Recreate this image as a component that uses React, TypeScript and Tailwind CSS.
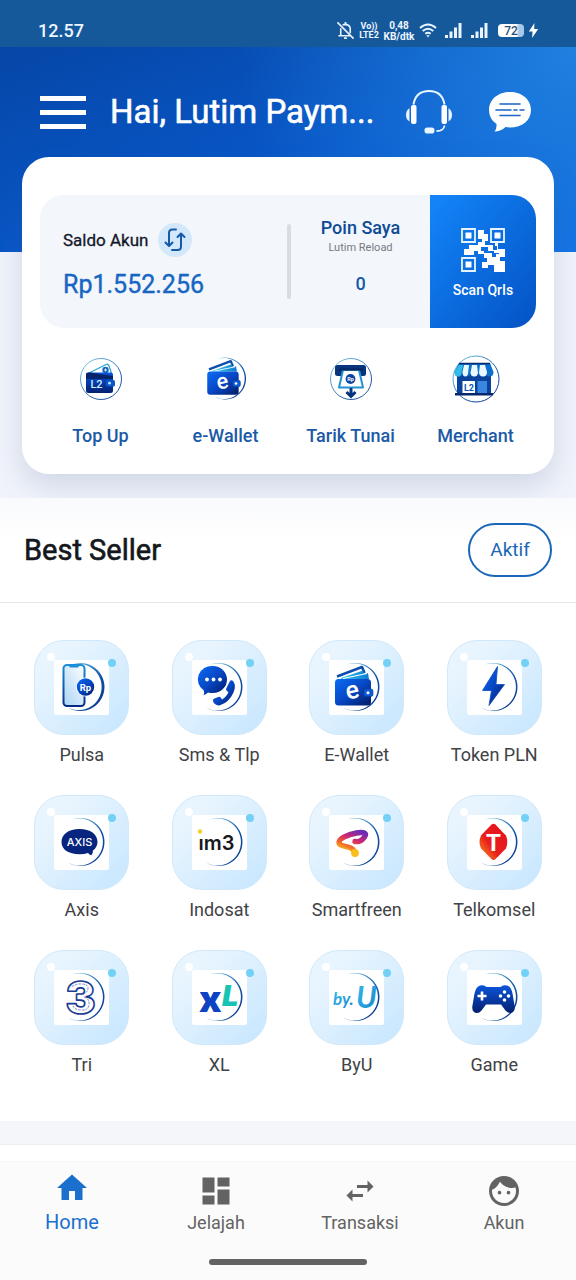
import React from 'react';
import type { ReactNode } from 'react';
import { MdHome, MdDashboard, MdSwapHoriz, MdFace } from 'react-icons/md';

// Shared gradients used by all the product icons
const IconDefs = () => (
    <svg width="0" height="0" className="absolute" aria-hidden="true">
        <defs>
            <linearGradient id="blue" x1="0" y1="0" x2="1" y2="1">
                <stop offset="0" stopColor="#0a6cf5" />
                <stop offset="0.5" stopColor="#0647c4" />
                <stop offset="1" stopColor="#021a63" />
            </linearGradient>
            <linearGradient id="blueDown" x1="0" y1="0" x2="0" y2="1">
                <stop offset="0" stopColor="#0a55dc" />
                <stop offset="1" stopColor="#04206f" />
            </linearGradient>
            <linearGradient id="cyan" x1="0" y1="0" x2="1" y2="0">
                <stop offset="0" stopColor="#36c9ee" />
                <stop offset="1" stopColor="#0b7bd0" />
            </linearGradient>
            <linearGradient id="ring" x1="0" y1="0" x2="1" y2="1">
                <stop offset="0" stopColor="#7fd0ea" />
                <stop offset="0.6" stopColor="#1256a8" />
                <stop offset="1" stopColor="#0a2f86" />
            </linearGradient>
            <linearGradient id="screen" x1="0" y1="1" x2="1" y2="0">
                <stop offset="0" stopColor="#a9d3f5" />
                <stop offset="1" stopColor="#ffffff" />
            </linearGradient>
            <linearGradient id="phone" x1="0" y1="0" x2="0" y2="1">
                <stop offset="0" stopColor="#1b8fd8" />
                <stop offset="1" stopColor="#052c80" />
            </linearGradient>
            <linearGradient id="smart" x1="0.9" y1="0" x2="0.4" y2="1">
                <stop offset="0" stopColor="#6a2bb5" />
                <stop offset="0.4" stopColor="#d2286f" />
                <stop offset="0.7" stopColor="#f2652b" />
                <stop offset="1" stopColor="#f9c51a" />
            </linearGradient>
            <linearGradient id="red" x1="1" y1="0" x2="0" y2="1">
                <stop offset="0" stopColor="#e60f1e" />
                <stop offset="0.6" stopColor="#e8201c" />
                <stop offset="1" stopColor="#fba01c" />
            </linearGradient>
            <linearGradient id="sky" x1="0" y1="0" x2="1" y2="1">
                <stop offset="0" stopColor="#35bdf0" />
                <stop offset="1" stopColor="#1785cf" />
            </linearGradient>
        </defs>
    </svg>
);

// Circle that gets thinner towards the left
const Ring = ({ thick = false }: { thick?: boolean }) => (
    <path
        fill="url(#ring)"
        d={thick
            ? 'M14.5 6.2A24 24 0 1 1 14.5 47.8A23.1 23.1 0 1 0 14.5 6.2Z'
            : 'M14.5 6.2A24 24 0 1 1 14.5 47.8A23.5 23.5 0 1 0 14.5 6.2Z'}
    />
);

const Wallet = () => (
    <g>
        <path d="M8 16.500 33 7l2.500 6" fill="none" stroke="#0b4fae" strokeWidth="2.600" strokeLinejoin="round" />
        <path d="M12 18 34 10.500l1 3.500 4-1 1 6H12z" fill="url(#cyan)" />
        <path d="M14 18.500 38 13.500" stroke="#fff" strokeWidth="1" />
        <rect x="6" y="19" width="36" height="26.500" rx="3.500" fill="url(#blue)" />
        <rect x="35" y="29" width="9" height="7.500" rx="2" fill="#0d5ad6" stroke="#0a3d9e" strokeWidth="0.600" />
        <circle cx="39" cy="32.700" r="1.500" fill="#fff" />
        <text x="23.500" y="38.500" textAnchor="middle" fontSize="25" fontWeight="500" fill="#fff" transform="rotate(-12 23.500 32)">e</text>
    </g>
);

const TopUpIcon = () => (
    <svg viewBox="0 0 48 48" className="size-12">
        <circle cx="24" cy="24" r="20.500" fill="none" stroke="url(#ring)" strokeWidth="0.900" />
        <path d="M13 17.500 29 9.500q2-.8 2.800 1L34.500 18v7H13z" fill="#fff" stroke="#2aa5d8" strokeWidth="1.300" />
        <circle cx="28.500" cy="15" r="3.200" fill="#1667b8" />
        <path d="M27 15h3m-1.500-1.500v3" stroke="#fff" strokeWidth="0.800" />
        <rect x="9" y="17.500" width="27" height="20.500" rx="2.500" fill="url(#blueDown)" />
        <path d="M9 19q0-2 4-1.500L36 21v3H9z" fill="#06246b" />
        <rect x="29" y="25" width="9" height="6.500" rx="1.500" fill="#0c57c9" />
        <circle cx="32.500" cy="28.200" r="1.400" fill="#bfe4ff" />
        <text x="19.500" y="33" textAnchor="middle" fontSize="11" fontWeight="500" fill="#cdefff">L2</text>
    </svg>
);

const EWalletIcon = () => (
    <svg viewBox="0 0 55 55" className="size-12">
        <Ring />
        <Wallet />
    </svg>
);

const WithdrawIcon = () => (
    <svg viewBox="0 0 48 48" className="size-12">
        <circle cx="24" cy="24" r="20.500" fill="none" stroke="url(#ring)" strokeWidth="0.900" />
        <rect x="8" y="10" width="31" height="11" rx="2.500" fill="#08347e" />
        <path d="M16 15h16l4 17.500H12z" fill="#fff" stroke="#2392d2" strokeWidth="2" strokeLinejoin="round" />
        <path d="M12 14.500h24" stroke="#052560" strokeWidth="2" />
        <circle cx="23.500" cy="24" r="4.900" fill="#0b449e" />
        <text x="23.500" y="26" textAnchor="middle" fontSize="5.500" fontWeight="700" fill="#fff">Rp</text>
        <path d="M24 33v8m-4.500-4 4.500 4.500 4.500-4.500" fill="none" stroke="#07327e" strokeWidth="3" />
    </svg>
);

const MerchantIcon = () => (
    <svg viewBox="0 0 48 48" className="size-12">
        <circle cx="24" cy="24" r="23" fill="none" stroke="url(#ring)" strokeWidth="1" />
        <path d="M5 18h34v20H5z" fill="#0a429c" />
        <path d="M3 38h38v2.500H3z" fill="#06286c" />
        <rect x="10.500" y="26" width="12.500" height="12" fill="#fff" />
        <text x="17" y="35.500" textAnchor="middle" fontSize="9" fontWeight="700" fill="#0b56b5">L2</text>
        <rect x="25.500" y="26" width="9.500" height="12" fill="#3a86e0" />
        <path d="M7 8h31l3.500 9q0 4.500-4 4.500T34 17q0 4.500-4 4.500T26 17q0 4.500-3.800 4.500T18.500 17q0 4.500-4 4.500T10.500 17q0 4.500-4 4.500T2.500 17z" fill="#0d6fd0" />
        <path d="M12 10h5l-1 9q-1 2.500-2.500 2.500-3 0-3-4.500zM20 10h5l1 8q-.5 3.500-3.800 3.500T18.500 18zM28 10h5l2 7q0 4.500-4 4.500-3.500 0-4-4z" fill="#eaf8ff" />
        <path d="M7 10h4l-2 10q-1 1.500-3 1.500-3.500 0-3-5z" fill="#32bde6" />
        <path d="M7 8.500h31" stroke="#06276b" strokeWidth="1.500" />
    </svg>
);

const Tile = ({ children, label }: { children: ReactNode; label: string }) => (
    <a href="#" className="flex flex-col items-center gap-2">
        <div className="relative flex size-[95px] items-center justify-center rounded-[30px] border border-[#d0e8f9] bg-linear-to-br from-[#e9f5fe] from-20% to-[#c6e6ff]">
            <span className="absolute left-3 top-3 size-2 rounded-full bg-white" />
            <span className="absolute right-3 top-[18px] size-2 rounded-full bg-[#72d1f5]" />
            <svg viewBox="0 0 55 55" className="size-[55px] rounded-xs bg-white">
                {children}
            </svg>
        </div>
        <span className="whitespace-nowrap text-[18px] leading-6 text-[#3f4246]">{label}</span>
    </a>
);

const products: { label: string; icon: ReactNode }[] = [
    {
        label: 'Pulsa',
        icon: (
            <>
                <Ring thick />
                <rect x="9.500" y="5" width="21" height="41" rx="3.500" fill="url(#screen)" stroke="url(#phone)" strokeWidth="2" />
                <path d="M14 5h12l-2 2.500h-8z" fill="#1b8fd8" />
                <circle cx="31.500" cy="27" r="9.500" fill="#fff" />
                <circle cx="31.500" cy="27" r="8.700" fill="url(#blue)" />
                <text x="31.500" y="30.500" textAnchor="middle" fontSize="9.500" fontWeight="700" fill="#fff">Rp</text>
            </>
        ),
    },
    {
        label: 'Sms & Tlp',
        icon: (
            <>
                <Ring />
                <path d="M21 6a14 13.500 0 0 1 0 27q-3 0-5-.6-2 2.200-4.500 2.600 1.200-2.500.3-4.500A14 13.500 0 0 1 21 6z" fill="url(#blue)" />
                <circle cx="15" cy="19.500" r="1.900" fill="#fff" />
                <circle cx="21.500" cy="19.500" r="1.900" fill="#fff" />
                <circle cx="28" cy="19.500" r="1.900" fill="#fff" />
                <path d="M38 21q1.500-1.500 3.200.2 3.300 4.500.3 11.300-4.500 10-13.500 12.800-5 .8-7-4-.6-2 1.400-2.800l4-1.600q1.600-.5 2.600 1l1 1.500q4.500-2.400 6.500-7.400l-1.300-.8q-1.600-1-1-2.800z" fill="url(#blue)" />
            </>
        ),
    },
    { label: 'E-Wallet', icon: <><Ring /><Wallet /></> },
    {
        label: 'Token PLN',
        icon: (
            <>
                <Ring />
                <path d="M30.500 6.500 15.500 30.500h9L22 45.500 37.500 24.500h-8.500z" fill="url(#blue)" stroke="#0a49bd" strokeWidth="0.800" strokeLinejoin="round" />
            </>
        ),
    },
    {
        label: 'Axis',
        icon: (
            <>
                <Ring />
                <path d="M25.500 14c11 0 18 5.300 18 13 0 3.600-1.800 6.500-4.600 8.600q.3 2.600-1.500 4.600-2-.4-3.400-2.300-3.600 1.300-8.500 1.300c-11 0-18-4.600-18-12.200S14.500 14 25.500 14z" fill="#07257f" />
                <text x="25.500" y="31" textAnchor="middle" fontSize="11" fontWeight="500" fill="#fff" className="font-['Inter',sans-serif]">AXIS</text>
            </>
        ),
    },
    {
        label: 'Indosat',
        icon: (
            <>
                <Ring />
                <text x="24.500" y="34.500" textAnchor="middle" fontSize="20" fontWeight="600" fill="#17181c" className="font-['Inter',sans-serif]">ım3</text>
                <circle cx="8" cy="16.500" r="2.200" fill="#f3d02c" />
            </>
        ),
    },
    {
        label: 'Smartfreen',
        icon: (
            <>
                <Ring />
                <path d="M26 26.500c5 1 9.500-3 10.500-6.500.6-2.500-4-3-9-2-9 1.700-17.500 5.500-17.500 9.500 0 3 5 3.500 9 4.500 4.500 1.200 6.500 3 7 6.500" fill="none" stroke="url(#smart)" strokeWidth="5.400" strokeLinecap="round" strokeLinejoin="round" />
                <circle cx="26" cy="38" r="3.900" fill="#f9bd1c" />
            </>
        ),
    },
    {
        label: 'Telkomsel',
        icon: (
            <>
                <Ring />
                <path d="M24.500 9.500q2-1.500 4 0C32 13.500 34.500 16 39 20.500q2.500 6.500 0 13C35 37.500 32 40.500 28 44.500q-1.500 1-3 0C21 40.500 18 37.500 14 33.500q-3-6.500 0-13C18 16 21 13.500 24.500 9.500z" fill="url(#red)" />
                <text x="26.500" y="36" textAnchor="middle" fontSize="24" fontWeight="700" fill="#fff">T</text>
            </>
        ),
    },
    {
        label: 'Tri',
        icon: (
            <>
                <Ring />
                <text x="26.500" y="44" textAnchor="middle" fontSize="45" fontWeight="900" fill="#fff" stroke="#1a3c93" strokeWidth="1.600" strokeLinejoin="round" className="font-['Inter',sans-serif]">3</text>
                <path d="M18 16.500q5-3 9-2.500 7 0 7 4t-5 6.500M30 27q6 2 5 8t-8 5q-6 0-8-4" fill="none" stroke="#3f5cae" strokeWidth="0.700" strokeDasharray="2.500 1" />
            </>
        ),
    },
    {
        label: 'XL',
        icon: (
            <>
                <Ring />
                <text x="7" y="42" fontSize="37" fontWeight="900" fill="#0b43c2" className="font-['Inter',sans-serif]">x</text>
                <text x="30" y="36" fontSize="29" fontWeight="900" fill="#17c3b2" className="font-['Inter',sans-serif] italic">L</text>
            </>
        ),
    },
    {
        label: 'ByU',
        icon: (
            <>
                <Ring />
                <text x="4" y="35" fontSize="17" fontWeight="700" fill="url(#sky)" className="font-['Lato',sans-serif] italic">by.</text>
                <text x="27" y="38" fontSize="30" fontWeight="700" fill="url(#sky)" className="font-['Lato',sans-serif] italic">U</text>
            </>
        ),
    },
    {
        label: 'Game',
        icon: (
            <>
                <Ring />
                <path d="M13 15.500q4-1.200 6.500 1.500h14q2.500-2.700 6.500-1.500 4 1 5.500 8l2.200 13q.5 6-4.200 6.500-3 .2-5-2.500l-4.500-6h-15l-4.500 6q-2 2.700-5 2.500-4.700-.5-4.200-6.500l2.200-13q1.500-7 5.500-8z" fill="url(#blueDown)" />
                <path d="M15 21.500v9m-4.500-4.500h9" stroke="#fff" strokeWidth="2.600" />
                <circle cx="37.500" cy="22" r="1.800" fill="#fff" />
                <circle cx="37.500" cy="30" r="1.800" fill="#fff" />
                <circle cx="33.500" cy="26" r="1.800" fill="#fff" />
                <circle cx="41.500" cy="26" r="1.800" fill="#fff" />
            </>
        ),
    },
];

const actions = [
    { label: 'Top Up', Icon: TopUpIcon },
    { label: 'e-Wallet', Icon: EWalletIcon },
    { label: 'Tarik Tunai', Icon: WithdrawIcon },
    { label: 'Merchant', Icon: MerchantIcon },
];

const SignalBars = () => (
    <svg viewBox="0 0 17 15" className="h-[15px] w-[17px]" fill="#e8f3ff">
        <rect x="0" y="12" width="3" height="3" />
        <rect x="4.500" y="8.500" width="3" height="6.500" />
        <rect x="9" y="4.500" width="3" height="10.500" />
        <rect x="13.500" y="0" width="3" height="15" />
    </svg>
);

const StatusBar = () => (
    <div className="flex h-[47px] items-center justify-between bg-[#15599b] pl-[38px] pr-[37px] pt-3.5 text-[#eef6ff]">
        <span className="text-[18px] font-medium leading-6">12.57</span>
        <div className="flex items-center">
            <svg viewBox="0 0 20 20" className="mr-1 size-[19px]" fill="none" stroke="#e8f3ff" strokeWidth="1.700">
                <path d="M7 4.500Q8 3.500 10 3.500q5 .5 5 5V13M5 7.500V15M2.500 15.500H15M1.500 1.500l17 17" />
                <path d="M10 1v2.500M8.500 18h3" strokeWidth="2" />
            </svg>
            <div className="mr-1 flex w-5 flex-col text-center text-[9px] font-bold leading-[9px]">
                <span>Vo))</span>
                <span>LTE2</span>
            </div>
            <div className="mr-1 flex w-8 flex-col text-center text-[10px] font-bold leading-[11px]">
                <span>0,48</span>
                <span>KB/dtk</span>
            </div>
            <svg viewBox="0 0 18 15" className="mr-2 h-[15px] w-[18px]" fill="none" stroke="#e8f3ff" strokeWidth="1.900">
                <path d="M1 5Q9-2 17 5M3.700 8Q9 3.300 14.300 8M6.300 10.800Q9 8.500 11.700 10.800" />
                <path d="M7.300 12.300h3.400L9 14.500z" fill="#e8f3ff" stroke="none" />
            </svg>
            <SignalBars />
            <span className="w-[9px]" />
            <SignalBars />
            <div className="ml-2.5 flex h-[13px] w-[26px] items-center justify-center rounded-sm bg-linear-to-r from-white from-70% to-[#a9c8e6] to-80% text-[12px] font-medium text-[#2d4f78]">72</div>
            <svg viewBox="0 0 11 16" className="ml-1 h-[15px] w-[11px]" fill="#fff">
                <path d="M6.500 0 0.500 9h4L4 16l6.500-9.500H6.200z" />
            </svg>
        </div>
    </div>
);

const HeadsetIcon = () => (
    <svg viewBox="0 0 46 44" className="h-11 w-[46px]" fill="#e9f6ff">
        <path d="M7.500 14.500C9 5.500 15 1 23 1s14 4.500 15.500 13.500" fill="none" stroke="#e9f6ff" strokeWidth="2" />
        <rect x="5" y="15" width="5.500" height="19" rx="2" fill="#fff" />
        <rect x="35.500" y="15" width="5.500" height="19" rx="2" fill="#fff" />
        <path d="M3.500 18v13.500Q0 29.500 0 25t3.500-7zM42.500 18v13.500Q46 29.500 46 25t-3.500-7z" />
        <rect x="18.500" y="37.500" width="10" height="6" rx="2.800" />
        <path d="M30.500 41c4.500 0 7.500-1.500 8-5.500" fill="none" stroke="#e9f6ff" strokeWidth="1.800" />
    </svg>
);

const ChatIcon = () => (
    <svg viewBox="0 0 42 40" className="h-10 w-[42px]">
        <path d="M21 0C33 0 42 7.500 42 18S33 35.500 21 35.500q-2.500 0-4.500-.4Q12 39.500 5.500 39.500 8 36.500 7.500 32 0 27 0 18C0 7.500 9 0 21 0z" fill="#fff" />
        <path d="M11 12h20M7 18h15M25 18h3M31 18h4M11 23.500h20" stroke="#1b63c4" strokeWidth="1.600" strokeLinecap="round" />
    </svg>
);

const QrIcon = () => (
    <svg viewBox="0 0 44 44" className="size-11" fill="#fff">
        <path fill="none" stroke="#e6f4ff" strokeWidth="1.800" d="M1 1h13v13H1zM30 1h13v13H30zM1 30h13v13H1z" />
        <path d="M4.500 4.500h6v6h-6zM33.500 4.500h6v6h-6zM4.500 33.500h6v6h-6z" />
        <path d="M17 2h6v4h4v7h-3v4h8v5h4v-4h-2v-3h3v6h7v8h-6v-4h-5v-2h-6v-4h-7v4h3v3h-6v-3h-4v4H3v-6h5v-4h9v-3h4v-3h-4v-4h4V7h-4z" />
        <path d="M23 25h8v4h4v-3h4v7h5v11H33v-7h-6v3h-6v-6h5v-4h-3z" />
    </svg>
);

const BalanceCard = () => (
    <section className="mx-[22px] -mt-[95px] rounded-[27px] bg-white pb-6 pt-[38px] shadow-[0_12px_28px_rgba(60,90,150,0.18)]">
        <div className="mx-[18px] flex h-[133px] overflow-hidden rounded-3xl bg-[#f3f6fa]">
            <div className="flex flex-1 flex-col gap-3 pl-[23px] pt-7">
                <div className="flex items-center gap-2.5">
                    <span className="text-[17px] leading-6 text-[#15182a] [-webkit-text-stroke:0.3px]">Saldo Akun</span>
                    <button type="button" aria-label="Muat ulang saldo" className="flex size-[34px] items-center justify-center rounded-full bg-[#d3e8fb]">
                        <svg viewBox="0 0 24 24" className="size-6" fill="none" stroke="#1559a8" strokeWidth="2" strokeLinecap="round" strokeLinejoin="round">
                            <path d="M13 1.500H9.500q-3.500 0-3.500 3.500V17M2.500 14.500 6 18l3.500-3.500M9 22h5.500q3.500 0 3.500-3.500V6.500M14.500 9 18 5.500 21.500 9" />
                        </svg>
                    </button>
                </div>
                <span className="text-[25px] leading-8 text-[#1766c4] [-webkit-text-stroke:0.4px]">Rp1.552.256</span>
            </div>
            <div className="my-[29px] w-1 rounded-full bg-[#d8dce4]" />
            <div className="flex w-[139px] flex-col items-center pt-[21px]">
                <span className="text-[18px] font-medium leading-6 text-[#0e4b96]">Poin Saya</span>
                <span className="text-[11px] leading-4 text-[#767a86]">Lutim Reload</span>
                <span className="mt-4 text-[18px] font-medium leading-6 text-[#1558a8]">0</span>
            </div>
            <button type="button" className="flex w-[106px] flex-col items-center gap-2 bg-linear-to-br from-[#1486fa] to-[#0652c4] pt-[33px] text-[14px] font-medium leading-5 text-white">
                <QrIcon />
                Scan QrIs
            </button>
        </div>
        <div className="mx-4 mt-[27px] grid grid-cols-4">
            {actions.map(({ label, Icon }) => (
                <a key={label} href="#" className="flex flex-col items-center gap-[19px]">
                    <Icon />
                    <span className="whitespace-nowrap text-[18px] font-medium leading-7 text-[#1a5aa6]">{label}</span>
                </a>
            ))}
        </div>
    </section>
);

const navItems = [
    { label: 'Home', Icon: MdHome, active: true },
    { label: 'Jelajah', Icon: MdDashboard, active: false },
    { label: 'Transaksi', Icon: MdSwapHoriz, active: false },
    { label: 'Akun', Icon: MdFace, active: false },
];

export default function App() {
    return (
        <div className="flex min-h-screen flex-col bg-white font-['Roboto',sans-serif]">
            <IconDefs />
            <StatusBar />
            <div className="bg-[#f0f3fa] pb-6">
                <header className="h-[205px] bg-linear-to-br from-[#0646a6] via-[#0856c6] to-[#0d6ce8]">
                    <div className="flex h-[205px] items-start bg-[radial-gradient(circle_at_100%_0%,#2080e0,transparent_55%)] pl-10 pr-[45px]">
                        <div className="flex h-[130px] min-w-0 flex-1 items-center">
                            <button type="button" aria-label="Menu" className="flex w-[46px] shrink-0 flex-col gap-[9px]">
                                <span className="h-[5px] bg-white" />
                                <span className="h-[5px] bg-white" />
                                <span className="h-[5px] bg-white" />
                            </button>
                            <h1 className="ml-6 flex-1 whitespace-nowrap text-[33px] leading-10 text-white [-webkit-text-stroke:0.6px]">Hai, Lutim Paym...</h1>
                            <button type="button" aria-label="Bantuan" className="mr-[37px] shrink-0"><HeadsetIcon /></button>
                            <button type="button" aria-label="Pesan" className="shrink-0"><ChatIcon /></button>
                        </div>
                    </div>
                </header>
                <BalanceCard />
            </div>

            <main className="flex flex-1 flex-col">
                <div className="flex h-[105px] items-center justify-between border-b border-[#e4e8ec] bg-linear-to-b from-[#f9fafc] to-white to-40% px-6">
                    <h2 className="text-[29px] leading-9 text-[#14171c] [-webkit-text-stroke:0.6px]">Best Seller</h2>
                    <button type="button" className="h-[54px] w-[84px] rounded-full border-2 border-[#1a66b8] text-[19px] text-[#1a66b8]">Aktif</button>
                </div>
                <div className="grid grid-cols-4 gap-y-7 px-[13px] pb-11 pt-[37px]">
                    {products.map((p) => (
                        <Tile key={p.label} label={p.label}>{p.icon}</Tile>
                    ))}
                </div>
                <div className="h-6 border-b border-[#eceff3] bg-[#f4f6fa]" />
                <div className="min-h-4 flex-1" />
            </main>

            <nav className="border-t border-[#f5f5f5] bg-[#fbfbfb] pb-[15px]">
                <div className="grid grid-cols-4">
                    {navItems.map(({ label, Icon, active }) => (
                        <a
                            key={label}
                            href="#"
                            className={active
                                ? 'flex h-[97px] flex-col items-center gap-0.5 pt-2 text-[20px] leading-7 text-[#1a70cc]'
                                : 'flex h-[97px] flex-col items-center pt-[11px] text-[18px] leading-7 text-[#636363]'}
                        >
                            <Icon className="size-9" />
                            {label}
                        </a>
                    ))}
                </div>
                <div className="mx-auto h-1.5 w-[158px] rounded-full bg-[#636363]" />
            </nav>
        </div>
    );
}
